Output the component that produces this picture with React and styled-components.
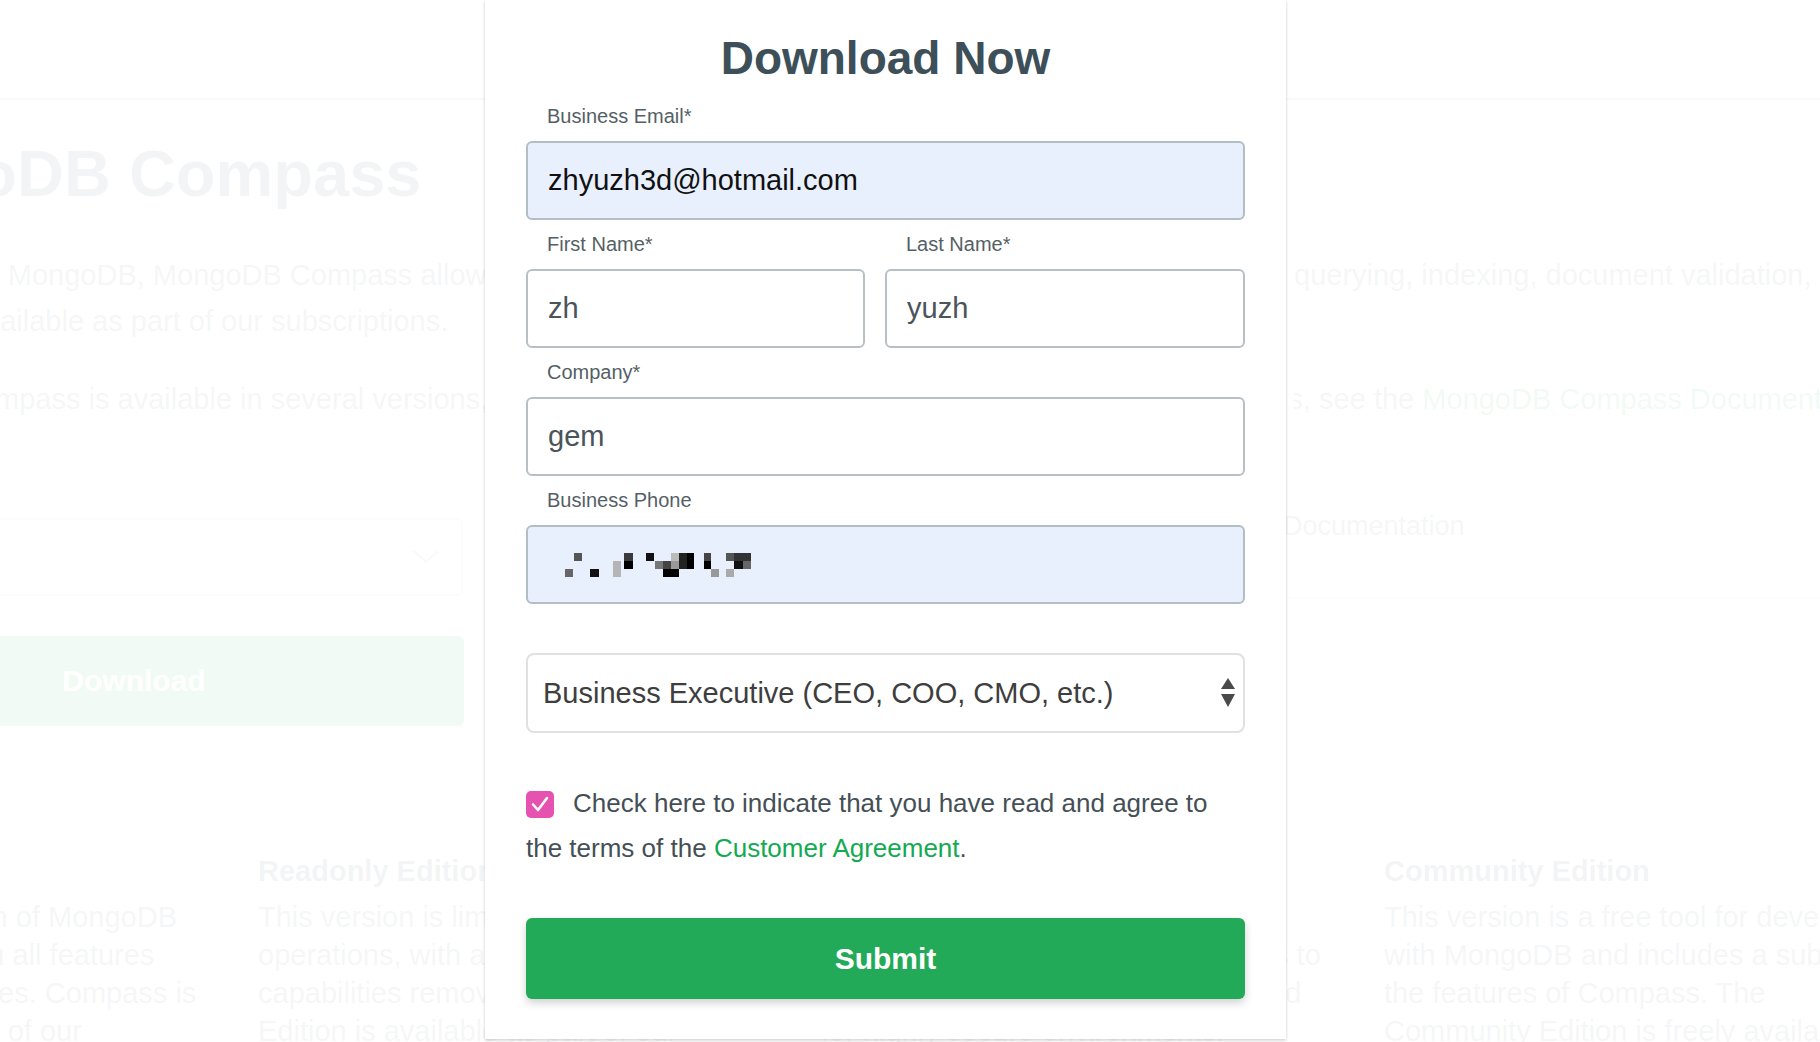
import React from 'react';
import styled, { createGlobalStyle } from 'styled-components';

const GlobalStyle = createGlobalStyle`
  html, body {
    margin: 0;
    padding: 0;
    background: #fff;
  }
  body {
    font-family: "Liberation Sans", Arial, sans-serif;
  }
`;

const Screen = styled.div`
  position: relative;
  width: 1820px;
  height: 1042px;
  overflow: hidden;
  background: #fff;
`;

/* ---------- page behind the dialog ---------- */

const Header = styled.div`
  height: 100px;
  box-sizing: border-box;
  border-bottom: 2px solid #9a9a9a;
`;

const Main = styled.div`
  margin-left: -196px;
  width: 2016px;
  color: #5d6c74;
`;

const HeroTitle = styled.h1`
  margin: 39px 0 0;
  font-size: 65px;
  line-height: 70px;
  font-weight: 700;
  color: #3d4f58;
  white-space: nowrap;
`;

const Para = styled.div`
  margin-top: ${p => p.gap}px;
  font-size: 29px;
  line-height: 46px;
`;

const SplitLine = styled.div`
  display: grid;
  grid-template-columns: 1490px 1fr;
  white-space: nowrap;
`;

const LeftPart = styled.span`
  padding-left: ${p => p.indent}px;
  overflow: hidden;
`;

const RightPart = styled.span`
  text-indent: ${p => p.shift || 0}px;
  overflow: hidden;
`;

const Link = styled.span`
  color: #13aa52;
`;

const ToolRow = styled.div`
  margin-top: 78px;
  display: grid;
  grid-template-columns: 659px 820px 1fr;
  align-items: end;
`;

const VersionSelect = styled.div`
  height: 78px;
  margin-bottom: 2px;
  box-sizing: border-box;
  border: 2px solid #b8c4c2;
  border-radius: 6px;
  display: flex;
  align-items: center;
  justify-content: flex-end;
  padding-right: 22px;
`;

const DocLinks = styled.div`
  grid-column: 3;
  height: 98px;
  box-sizing: border-box;
  border-bottom: 1px solid #b8c4c2;
  font-size: 27px;
  line-height: 34px;
  padding-top: 9px;
  color: #5d6c74;
`;

const DownloadButton = styled.div`
  margin-top: 38px;
  width: 660px;
  height: 90px;
  border-radius: 6px;
  background: #13aa52;
  color: #fff;
  font-size: 30px;
  font-weight: 700;
  display: flex;
  align-items: center;
  justify-content: center;
`;

const Editions = styled.div`
  margin: 127px 0 0 -109px;
  display: grid;
  grid-template-columns: repeat(4, 500px);
  column-gap: 63px;
`;

const EditionTitle = styled.h3`
  margin: 0 0 9px;
  font-size: 29px;
  line-height: 36px;
  font-weight: 700;
  color: #3d4f58;
  white-space: nowrap;
`;

const EditionLine = styled.div`
  font-size: 29px;
  line-height: 38px;
  white-space: nowrap;
`;

const Backdrop = styled.div`
  position: absolute;
  inset: 0;
  background: rgba(255, 255, 255, 0.94);
`;

/* ---------- dialog ---------- */

const Modal = styled.div`
  position: absolute;
  top: 0;
  left: 485px;
  width: 801px;
  height: 1039px;
  box-sizing: border-box;
  padding: 31px 41px 0;
  background: #fff;
  box-shadow: 0 0 3px rgba(0, 0, 0, 0.1), 0 2px 3px rgba(0, 0, 0, 0.12);
`;

const Title = styled.h2`
  margin: 0 0 18px;
  font-size: 46px;
  line-height: 55px;
  font-weight: 700;
  color: #3d4f58;
  text-align: center;
`;

const Field = styled.div`
  display: flex;
  flex-direction: column;
  margin-bottom: 12px;
`;

const Label = styled.label`
  display: block;
  height: 24px;
  margin-bottom: 13px;
  padding-left: 21px;
  font-size: 20px;
  line-height: 24px;
  color: #555f66;
  white-space: nowrap;
`;

const NameRow = styled.div`
  display: grid;
  grid-template-columns: 339px 1fr;
  column-gap: 20px;
`;

const TextInput = styled.input`
  display: block;
  width: 100%;
  height: 79px;
  box-sizing: border-box;
  margin: 0;
  border: 2px solid ${p => (p.$filled ? '#b3bdc4' : '#b9c0c5')};
  border-radius: 6px;
  padding: 0 20px;
  background: ${p => (p.$filled ? '#e8f0fe' : '#fff')};
  font-family: "Liberation Sans", Arial, sans-serif;
  font-size: 29px;
  color: ${p => (p.$filled ? '#111' : '#49545b')};
  outline: none;
`;

const PhoneBox = styled.div`
  height: 79px;
  box-sizing: border-box;
  border: 2px solid #b3bdc4;
  border-radius: 6px;
  padding: 0 36px;
  background: #e8f0fe;
  display: flex;
  align-items: center;
`;

const RoleSelect = styled.div`
  height: 80px;
  box-sizing: border-box;
  border: 2px solid #e1e1e1;
  border-radius: 8px;
  padding: 0 8px 0 15px;
  display: flex;
  align-items: center;
  justify-content: space-between;
  font-size: 29px;
  color: #3e3e3e;
  white-space: nowrap;
`;

const Agreement = styled.p`
  margin: 48px 0 0;
  font-size: 26px;
  line-height: 45px;
  color: #454f56;
`;

const CheckBox = styled.span`
  display: inline-flex;
  align-items: center;
  justify-content: center;
  width: 28px;
  height: 27px;
  margin-right: 19px;
  vertical-align: 0;
  border-radius: 5px;
  background: #e652b0;
`;

const AgreementLink = styled.a`
  color: #13aa52;
  text-decoration: none;
`;

const SubmitButton = styled.button`
  display: block;
  width: 100%;
  height: 81px;
  margin-top: 47px;
  border: 0;
  border-radius: 6px;
  background: #22aa58;
  box-shadow: 0 4px 9px rgba(0, 0, 0, 0.18);
  color: #fff;
  font-family: "Liberation Sans", Arial, sans-serif;
  font-size: 30px;
  font-weight: 700;
`;

const mosaic = [
  [10, 0, 8, 8, '#555'],
  [1, 16, 8, 8, '#666'],
  [26, 16, 9, 8, '#111'],
  [49, 8, 8, 16, '#b5b5b5'],
  [60, 0, 9, 8, '#3a3a3a'],
  [60, 8, 9, 8, '#000'],
  [82, 0, 8, 8, '#111'],
  [91, 8, 8, 8, '#777'],
  [99, 16, 16, 8, '#000'],
  [99, 8, 8, 8, '#444'],
  [107, 0, 8, 8, '#bbb'],
  [107, 8, 8, 8, '#999'],
  [115, 0, 8, 16, '#222'],
  [123, 0, 7, 16, '#000'],
  [140, 0, 7, 8, '#444'],
  [140, 8, 7, 8, '#000'],
  [147, 16, 8, 8, '#999'],
  [162, 0, 8, 8, '#555'],
  [162, 16, 8, 8, '#aaa'],
  [170, 0, 17, 8, '#333'],
  [170, 8, 9, 8, '#111'],
  [179, 8, 8, 8, '#666'],
];

const editions = [
  {
    title: 'Full Version',
    lines: [
      'The full-featured version of MongoDB',
      'Compass that gives you all features',
      'and advanced capabilities. Compass is',
      'readily available as part of our',
    ],
  },
  {
    title: 'Readonly Edition',
    lines: [
      'This version is limited strictly to read',
      'operations, with all write and delete',
      'capabilities removed. The Readonly',
      'Edition is available as part of our',
    ],
  },
  {
    title: 'Isolated Edition',
    lines: [
      'This version disables all network',
      'connections, except the connections to',
      'the MongoDB instance. It is designed',
      'for highly secure environments.',
    ],
  },
  {
    title: 'Community Edition',
    lines: [
      'This version is a free tool for developers',
      'with MongoDB and includes a subset of',
      'the features of Compass. The',
      'Community Edition is freely available',
    ],
  },
];

export default function App() {
  return (
    <Screen>
      <GlobalStyle />
      <Header />
      <Main>
        <HeroTitle>MongoDB Compass</HeroTitle>
        <Para gap={43}>
          <SplitLine>
            <LeftPart indent={12}>As the GUI for MongoDB, MongoDB Compass allows you to make smarter decisions about document structure,</LeftPart>
            <RightPart>querying, indexing, document validation, and more.</RightPart>
          </SplitLine>
          <SplitLine>
            <LeftPart indent={6}>Compass is available as part of our subscriptions.</LeftPart>
            <RightPart />
          </SplitLine>
        </Para>
        <Para gap={32}>
          <SplitLine>
            <LeftPart indent={17}>MongoDB Compass is available in several versions, described below. For more information on the editions,</LeftPart>
            <RightPart shift={-99}>versions, see the <Link>MongoDB Compass Documentation</Link>.</RightPart>
          </SplitLine>
        </Para>
        <ToolRow>
          <VersionSelect>
            <svg width="26" height="14" viewBox="0 0 26 14">
              <path d="M1 1 L13 12 L25 1" fill="none" stroke="#8a9396" strokeWidth="2" />
            </svg>
          </VersionSelect>
          <DocLinks>Documentation</DocLinks>
        </ToolRow>
        <DownloadButton>Download</DownloadButton>
        <Editions>
          {editions.map(ed => (
            <div key={ed.title}>
              <EditionTitle>{ed.title}</EditionTitle>
              {ed.lines.map(line => (
                <EditionLine key={line}>{line}</EditionLine>
              ))}
            </div>
          ))}
        </Editions>
      </Main>
      <Backdrop />

      <Modal>
        <Title>Download Now</Title>
        <Field>
          <Label>Business Email*</Label>
          <TextInput $filled readOnly value="zhyuzh3d@hotmail.com" />
        </Field>
        <NameRow>
          <Field>
            <Label>First Name*</Label>
            <TextInput readOnly value="zh" />
          </Field>
          <Field>
            <Label>Last Name*</Label>
            <TextInput readOnly value="yuzh" />
          </Field>
        </NameRow>
        <Field>
          <Label>Company*</Label>
          <TextInput readOnly value="gem" />
        </Field>
        <Field>
          <Label>Business Phone</Label>
          <PhoneBox>
            <svg width="188" height="24" viewBox="0 0 188 24">
              {mosaic.map(([x, y, w, h, c], i) => (
                <rect key={i} x={x} y={y} width={w} height={h} fill={c} />
              ))}
            </svg>
          </PhoneBox>
        </Field>
        <Field>
          <Label />
          <RoleSelect>
            <span>Business Executive (CEO, COO, CMO, etc.)</span>
            <svg width="14" height="30" viewBox="0 0 14 30">
              <path d="M7 0 L14 11 L0 11 Z" fill="#4a4a4a" />
              <path d="M0 16 L14 16 L7 29 Z" fill="#4a4a4a" />
            </svg>
          </RoleSelect>
        </Field>
        <Agreement>
          <CheckBox>
            <svg width="18" height="16" viewBox="0 0 18 16">
              <path d="M2 8.5 L7 14 L16 2" fill="none" stroke="#fff" strokeWidth="2.6" strokeLinecap="round" strokeLinejoin="round" />
            </svg>
          </CheckBox>
          Check here to indicate that you have read and agree to the terms of the{' '}
          <AgreementLink>Customer Agreement</AgreementLink>.
        </Agreement>
        <SubmitButton>Submit</SubmitButton>
      </Modal>
    </Screen>
  );
}
